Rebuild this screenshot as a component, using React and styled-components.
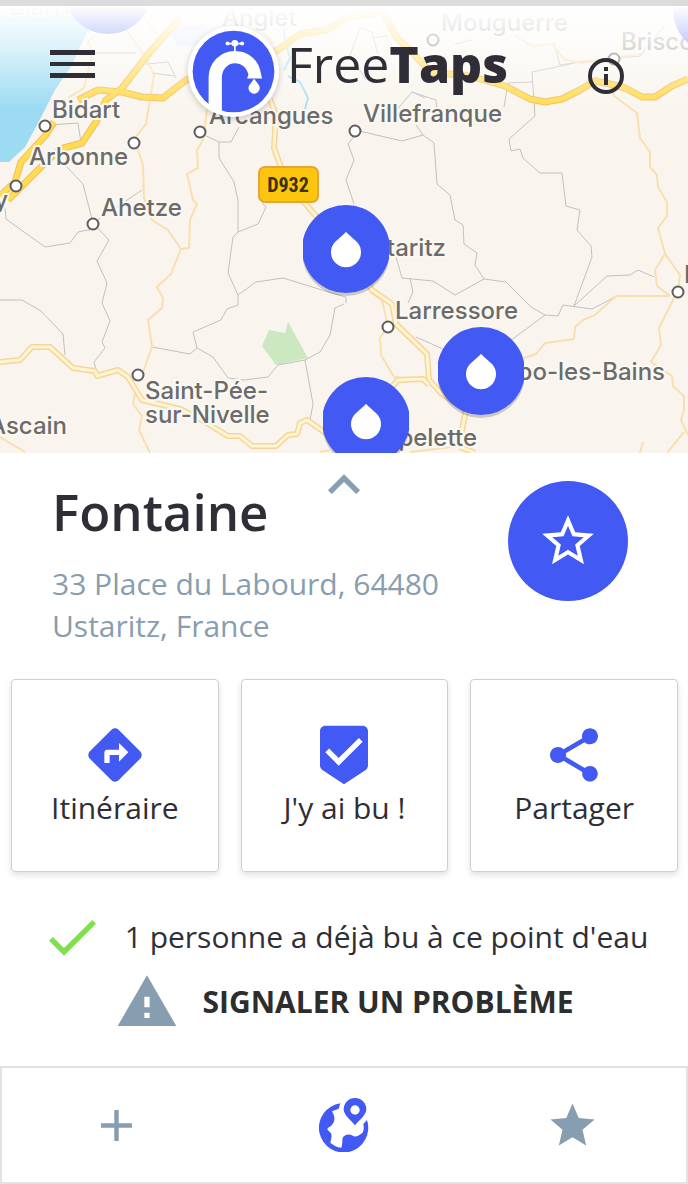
import React, { useState } from 'react';
import styled, { createGlobalStyle } from 'styled-components';
import {
  MdAdd,
  MdBeenhere,
  MdCheck,
  MdDirections,
  MdKeyboardArrowUp,
  MdShare,
  MdStar,
  MdStarBorder,
  MdWarning,
} from 'react-icons/md';

const blue = '#4259f3';
const slate = '#879db0';
const ink = '#2f2e37';

//Map size, every map coordinate below uses it
const mapWidth = 688;
const mapHeight = 447;

//Styled Components
const GlobalStyle = createGlobalStyle`
  * {
    box-sizing: border-box;
  }
  body {
    margin: 0;
    background: #fff;
    color: ${ink};
    font-family: "Open Sans", "Noto Sans", sans-serif;
  }
  button {
    margin: 0;
    padding: 0;
    border: 0;
    background: none;
    color: inherit;
    font: inherit;
    cursor: pointer;
  }
  h1, h2, p {
    margin: 0;
  }
  svg {
    display: block;
  }
`
const StyledPage = styled.div`
  display: flex;
  flex-direction: column;
  min-height: 100vh;
`
const StyledStatusStrip = styled.div`
  height: 6px;
  background: #dcdcdc;
`
const StyledMap = styled.section`
  position: relative;
  aspect-ratio: ${mapWidth} / ${mapHeight};
  overflow: hidden;
  background: #f9f5ee;
`
const StyledMapDrawing = styled.svg`
  width: 100%;
  height: 100%;
`
const StyledMapLabel = styled.text`
  fill: #6c6b6b;
  font-family: Inter, sans-serif;
  font-size: 24px;
  font-weight: 500;
  paint-order: stroke;
  stroke: #fbf8f2;
  stroke-width: 4px;
  stroke-linejoin: round;
`
const StyledRoadNumber = styled.text`
  fill: #3b3209;
  font-family: "Liberation Sans Narrow", "Roboto Condensed", "Liberation Sans", sans-serif;
  font-size: 20px;
  font-weight: 700;
`
const StyledPin = styled.button`
  position: absolute;
  left: ${({ $x }) => ($x / mapWidth) * 100}%;
  top: ${({ $y }) => ($y / mapHeight) * 100}%;
  width: 86px;
  height: 92px;
`
const StyledHeader = styled.header`
  position: absolute;
  inset: 0 0 auto;
  display: grid;
  grid-template-columns: 1fr auto 1fr;
  align-items: start;
  padding: 20px 42px 0 50px;
  background: linear-gradient(#fff, rgba(255, 255, 255, 0.7) 30%, rgba(255, 255, 255, 0) 85%);
`
const StyledMenuButton = styled.button`
  display: flex;
  align-items: center;
  justify-self: start;
  height: 76px;
`
const StyledInfoButton = styled.button`
  display: flex;
  align-items: center;
  justify-content: center;
  justify-self: end;
  width: 80px;
  height: 100px;
`
const StyledBrand = styled.div`
  display: flex;
  align-items: flex-start;
  gap: 8px;
`
const StyledBadge = styled.svg`
  width: 91px;
  height: 91px;
  border-radius: 50%;
  box-shadow: 0 2px 6px rgba(0, 0, 0, 0.2);
`
const StyledWordmark = styled.h1`
  font-size: 50px;
  font-weight: 400;
  line-height: 76px;

  b {
    font-weight: 800;
  }
`
const StyledPlace = styled.section`
  position: relative;
  display: flex;
  justify-content: space-between;
  gap: 20px;
  padding: 28px 60px 32px 52px;
`
const StyledExpand = styled.button`
  position: absolute;
  top: 0;
  left: 50%;
  margin-left: -32px;
  color: ${slate};
`
const StyledPlaceName = styled.h2`
  margin-bottom: 22px;
  font-size: 51px;
  font-weight: 600;
  line-height: 60px;
`
const StyledAddress = styled.p`
  max-width: 400px;
  color: ${slate};
  font-size: 30px;
  line-height: 42px;
`
const StyledFavorite = styled.button`
  display: flex;
  flex: none;
  align-items: center;
  justify-content: center;
  width: 120px;
  height: 120px;
  border-radius: 50%;
  background: ${blue};
  color: #fff;
`
const StyledActions = styled.div`
  display: grid;
  grid-template-columns: repeat(3, 1fr);
  gap: 22px;
  padding: 0 10px 0 11px;
`
const StyledAction = styled.button`
  display: flex;
  flex-direction: column;
  align-items: center;
  justify-content: center;
  height: 193px;
  border: 1px solid #cfcfcf;
  border-radius: 4px;
  box-shadow: 0 3px 6px rgba(0, 0, 0, 0.12);
  font-size: 30px;
  line-height: 42px;

  svg {
    color: ${blue};
  }
`
const StyledNotes = styled.div`
  display: flex;
  flex-direction: column;
  align-items: center;
  gap: 1px;
  padding: 33px 0 32px;
  font-size: 30px;
  line-height: 42px;
`
const StyledDrinkers = styled.p`
  display: flex;
  align-items: center;
  gap: 21px;

  svg {
    color: #7ee04b;
  }
`
const StyledReport = styled.button`
  display: flex;
  align-items: center;
  gap: 24px;
  color: #2d2d2d;
  font-weight: 700;
  text-transform: uppercase;

  svg {
    color: ${slate};
  }
`
const StyledTabs = styled.nav`
  display: grid;
  grid-template-columns: repeat(3, 1fr);
  height: 118px;
  margin-top: auto;
  border: 2px solid #e2e2e2;
`
const StyledTab = styled.button`
  display: flex;
  align-items: center;
  justify-content: center;
  color: ${({ $active }) => ($active ? blue : slate)};
`

const borders = [
  'M93 53 H136',
  'M146 64 L168 62 L176 78 M152 73 L174 76',
  'M50 125 L78 123 L81 143',
  'M66 166 L83 184 L93 223 L109 240 L97 261 L107 283 L102 303 L110 321 L102 342 L105 348 L94 362 L96 370',
  'M93 223 L142 190',
  'M5 208 L6 219 L45 247 L70 243 L78 232 L93 229',
  'M0 300 H22 L41 311 L63 334 L65 355',
  'M200 133 L219 142 L231 142 L239 127',
  'M219 142 L219 158 L234 182 L238 200 V232 L233 237 L228 273 L238 295 V305 L227 309 L221 320 L193 332 L197 348 L190 354 L152 347',
  'M238 232 L258 224 L266 207 L262 203 L275 195',
  'M238 295 L256 282 L283 278 L335 294 L346 297 V303',
  'M197 348 L213 357 L228 378 L244 380 L268 377 L278 365 L305 360 L320 352 L330 335 L335 308 L344 304',
  'M305 360 L313 404 L310 420',
  'M355 130 L402 141 L423 135 L416 125 M423 135 L434 143 L437 184 L450 195 L455 220 L463 225 L464 244 L477 253 L475 265 L484 279',
  'M355 135 L348 144 L354 160 L346 180 L354 204',
  'M388 120 L412 92 L436 100 L437 110 M412 92 L425 98',
  'M504 107 L508 83 L533 82 M575 63 L532 72 L535 116 L509 139 L511 151 L520 149 L523 158 L540 173 H562 L566 206 L580 210 L577 230 L591 246 L592 257 L574 306',
  'M394 250 L402 278 L433 281 L455 295 L484 279 L506 282 L531 307 L545 315 L558 316 L563 305 L592 309 L615 297',
  'M574 306 L607 276 L630 275 L638 270 L654 277',
  'M545 315 L510 341 M416 337 L443 349',
  'M410 278 L413 292 L408 303',
  'M366 80 L350 55 L360 28 L372 32 L378 54 M372 38 L388 36 M455 44 L472 40',
  'M554 43 L560 65 L578 62 L640 56 L665 25',
]

const lanes = [
  'M95 35 L88 42 L93 52 L84 88 L68 98',
  'M142 15 L158 35 M128 32 L146 58 L154 75 L146 124 L134 139 L143 165 L144 198 L152 220 L168 230 L181 249',
  'M207 110 L203 140 L197 150 L198 168 L187 174 L193 200 L197 204 L190 220 L189 248 L181 249 L171 274 L157 287 L163 298 L162 308 L148 320 L152 347 L143 372',
  'M135 393 L133 404 L142 416 L139 430 L150 453',
  'M0 437 L25 452',
  'M388 326 L380 338 L381 355 L394 377 L404 378',
  'M370 292 L382 300 L388 326',
  'M524 358 L536 354 L545 343 L574 339 L575 327 L583 320 L595 315 L616 296 H670',
  'M514 35 L532 46 L552 44 L565 60 L583 63 L640 54',
  'M605 74 L614 96 L637 113 L640 138 L650 152 V167 L657 175 L658 187 L667 202 V216 L658 228 L665 254 L680 275 L678 290 L668 310 L659 328 L661 345 L651 362 L672 376 L673 386 L684 396 V410 L681 420 L688 435',
  'M665 254 L655 270 L657 286 L670 296',
  'M475 451 L460 446 L410 452 M640 453 L643 442 M667 453 L684 432',
  'M266 46 L272 42 L262 30',
  'M320 452 L330 450',
]

const mainRoads = [
  'M0 362 L20 360 L32 347 H50 L73 368 L95 371 L97 376 L118 370 L128 377 L142 400 L180 409 L200 419 L228 436 H240 L252 446 H276 L288 435 L297 434 L300 423 L307 420 L330 436',
  'M270 99 L276 115 L274 148 L282 170 L304 202 L345 250 L372 290 L392 304 L396 324 L427 354 L429 380 L442 394 L466 410 L461 435',
  'M384 396 L398 380 L423 379 L429 385',
  'M460 447 L475 453',
]

const motorways = [
  'M0 196 L15 182 L21 162 L45 136 L54 122',
  'M8 200 L40 168 L60 149 L82 143 L96 122 L106 100 L122 88 L150 52 L180 18',
  'M78 100 L98 90 L122 92 L142 97 L163 98 L186 80 L230 70 L278 50 L300 34 L326 30 L350 16 L383 12 L397 38 L412 52 L430 72 L470 76 L505 86 L530 99 L545 102 L562 99 L580 90 L595 81 L610 84 L625 88 L642 97 L655 97 L672 86 L688 79',
]

const towns = [
  [45, 126], [134, 143], [16, 186], [93, 224], [200, 132], [355, 131],
  [433, 40], [614, 59], [678, 292], [388, 327], [138, 375],
]

const labels = [
  { name: 'Biarritz', x: 9, y: 15, faded: true },
  { name: 'Anglet', x: 222, y: 26, faded: true },
  { name: 'Mouguerre', x: 441, y: 31, faded: true },
  { name: 'Briscous', x: 621, y: 50, faded: true },
  { name: 'Bidart', x: 52, y: 118 },
  { name: 'Arcangues', x: 209, y: 124 },
  { name: 'Villefranque', x: 363, y: 122 },
  { name: 'Arbonne', x: 29, y: 165 },
  { name: 'Guéthary', x: 8, y: 208, end: true },
  { name: 'Ahetze', x: 101, y: 216 },
  { name: 'Ustaritz', x: 446, y: 256, end: true },
  { name: 'Hasparren', x: 684, y: 283 },
  { name: 'Larressore', x: 395, y: 319 },
  { name: 'Cambo-les-Bains', x: 665, y: 380, end: true },
  { name: 'Saint-Pée-', x: 145, y: 399 },
  { name: 'sur-Nivelle', x: 145, y: 423 },
  { name: 'Ascain', x: 67, y: 434, end: true },
  { name: 'Espelette', x: 477, y: 446, end: true },
]

const pins = [
  { name: 'Ustaritz', x: 303, y: 199 },
  { name: 'Cambo-les-Bains', x: 438, y: 321 },
  { name: 'Espelette', x: 323, y: 371 },
]

const actions = [
  { label: 'Itinéraire', Icon: MdDirections },
  { label: "J'y ai bu !", Icon: MdBeenhere },
  { label: 'Partager', Icon: MdShare },
]

const MapDrawing = () => (
  <StyledMapDrawing viewBox={`0 6 ${mapWidth} ${mapHeight}`} fill="none" strokeLinejoin="round">
    <path d="M0 6 H97 L87 33 L80 47 L72 65 L55 90 L37 125 L25 147 L9 162 H0 Z" fill="#9ddbf2" />
    <path d="M165 28 L205 25 L225 32 L218 45 L178 46 Z" fill="#dfe6f6" />
    <path d="M285 6 L284 35 L290 58 L284 70 M288 76 L300 82 L308 98 L305 109" stroke="#a9dff0" strokeWidth="2" />
    <path d="M288 322 L308 358 L276 365 L262 346 L269 330 L285 333 Z" fill="#cbe8c0" />
    {borders.map((d) => <path key={d} d={d} stroke="#c3c0bd" />)}
    {lanes.map((d) => <path key={d} d={d} stroke="#f9dfb0" strokeWidth="2" />)}
    {mainRoads.map((d) => (
      <g key={d}>
        <path d={d} stroke="#f5d59c" strokeWidth="6" />
        <path d={d} stroke="#fff5cf" strokeWidth="3" />
      </g>
    ))}
    {motorways.map((d) => <path key={d} d={d} stroke="#f0bd66" strokeWidth="7" />)}
    {motorways.map((d) => <path key={d} d={d} stroke="#ffdc50" strokeWidth="5" />)}
    {labels.map(({ name, x, y, end, faded }) => (
      <StyledMapLabel key={name} x={x} y={y} textAnchor={end ? 'end' : 'start'} opacity={faded ? 0.7 : 1}>
        {name}
      </StyledMapLabel>
    ))}
    {towns.map(([x, y]) => (
      <circle key={`${x}-${y}`} cx={x} cy={y} r="5.5" fill="#fff" stroke="#5f5d5b" strokeWidth="2" />
    ))}
    <rect x="259" y="167" width="59" height="35" rx="6" fill="#fdc50d" stroke="#e5a437" strokeWidth="2" />
    <StyledRoadNumber x="288" y="192" textAnchor="middle">D932</StyledRoadNumber>
    <circle cx="108" cy="-10" r="44" fill={blue} />
    <circle cx="717" cy="10" r="44" fill={blue} />
  </StyledMapDrawing>
)

const FountainPin = ({ name, x, y }) => (
  <StyledPin type="button" aria-label={name} $x={x} $y={y}>
    <svg width="86" height="92" viewBox="0 0 86 92">
      <circle cx="43" cy="47" r="44" fill="#000" opacity="0.18" />
      <circle cx="43" cy="44" r="44" fill={blue} />
      <path d="M42 28 Q43 26 44 28 L54 37 A15 15 0 1 1 32 37 Z" fill="#fff" />
    </svg>
  </StyledPin>
)

const TapBadge = () => (
  <StyledBadge viewBox="24 17 274 274">
    <circle cx="161" cy="154" r="137" fill="#fff" />
    <circle cx="161" cy="154" r="123" fill={blue} />
    <path
      d="M86 264 V172 A78 80 0 0 1 164 92 C208 92 238 120 244 162 L247 175 H202 L206 163 C200 141 186 129 165 129 A39 44 0 0 0 126 174 V276 Z"
      fill="#fff"
    />
    <path d="M165 72 V94 M143 70 H187" stroke="#fff" strokeWidth="5" />
    <circle cx="143" cy="70" r="6" fill="#fff" />
    <circle cx="165" cy="69" r="10" fill="#fff" />
    <circle cx="187" cy="70" r="6" fill="#fff" />
    <path d="M223 176 L235 192 A17 17 0 1 1 211 192 Z" fill="#fff" />
  </StyledBadge>
)

const MenuIcon = () => (
  <svg width="45" height="28" viewBox="0 0 45 28" fill={ink}>
    <path d="M0 0 H45 V5 H0 Z M0 12 H45 V16 H0 Z M0 23 H45 V28 H0 Z" />
  </svg>
)

const InfoIcon = () => (
  <svg width="36" height="36" viewBox="0 0 36 36" fill={ink}>
    <circle cx="18" cy="18" r="16" fill="none" stroke={ink} strokeWidth="4" />
    <path d="M16 9 H20 V13 H16 Z M16 16 H20 V27 H16 Z" />
  </svg>
)

const GlobeIcon = () => (
  <svg width="51" height="54" viewBox="59 54 153 162" fill="currentColor">
    <path d="M123 70 A74 74 0 1 0 203 120 L192 132 C196 150 190 160 184 162 C176 170 166 172 158 166 C148 160 134 164 130 174 C128 184 130 194 126 203 C114 202 102 196 93 188 C95 178 99 170 95 160 C92 154 84 152 84 147 C86 141 94 140 98 134 C106 126 106 116 104 108 C103 102 99 98 98 94 L118 86 Z" />
    <path
      fillRule="evenodd"
      d="M167 136 C156 122 133 106 133 88 A34 34 0 0 1 201 88 C201 106 178 122 167 136 Z M167 76 A14 14 0 1 0 167 104 A14 14 0 1 0 167 76 Z"
    />
  </svg>
)

const App = () => {
  const [tab, setTab] = useState('map');

  return (
    <StyledPage>
      <GlobalStyle />
      <StyledStatusStrip />

      <StyledMap>
        <MapDrawing />
        {pins.map((pin) => <FountainPin key={pin.name} {...pin} />)}
        <StyledHeader>
          <StyledMenuButton type="button" aria-label="Menu"><MenuIcon /></StyledMenuButton>
          <StyledBrand>
            <TapBadge />
            <StyledWordmark>Free<b>Taps</b></StyledWordmark>
          </StyledBrand>
          <StyledInfoButton type="button" aria-label="Informations"><InfoIcon /></StyledInfoButton>
        </StyledHeader>
      </StyledMap>

      <StyledPlace>
        <div>
          <StyledPlaceName>Fontaine</StyledPlaceName>
          <StyledAddress>33 Place du Labourd, 64480 Ustaritz, France</StyledAddress>
        </div>
        <StyledExpand type="button" aria-label="Agrandir"><MdKeyboardArrowUp size={64} /></StyledExpand>
        <StyledFavorite type="button" aria-label="Ajouter aux favoris"><MdStarBorder size={62} /></StyledFavorite>
      </StyledPlace>

      <StyledActions>
        {actions.map(({ label, Icon }) => (
          <StyledAction key={label} type="button">
            <Icon size={64} />
            {label}
          </StyledAction>
        ))}
      </StyledActions>

      <StyledNotes>
        <StyledDrinkers><MdCheck size={64} />1 personne a déjà bu à ce point d'eau</StyledDrinkers>
        <StyledReport type="button"><MdWarning size={64} />Signaler un problème</StyledReport>
      </StyledNotes>

      <StyledTabs>
        <StyledTab type="button" aria-label="Ajouter" $active={tab === 'add'} onClick={() => setTab('add')}>
          <MdAdd size={53} />
        </StyledTab>
        <StyledTab type="button" aria-label="Carte" $active={tab === 'map'} onClick={() => setTab('map')}>
          <GlobeIcon />
        </StyledTab>
        <StyledTab type="button" aria-label="Favoris" $active={tab === 'favorites'} onClick={() => setTab('favorites')}>
          <MdStar size={53} />
        </StyledTab>
      </StyledTabs>
    </StyledPage>
  )
}

export default App;
